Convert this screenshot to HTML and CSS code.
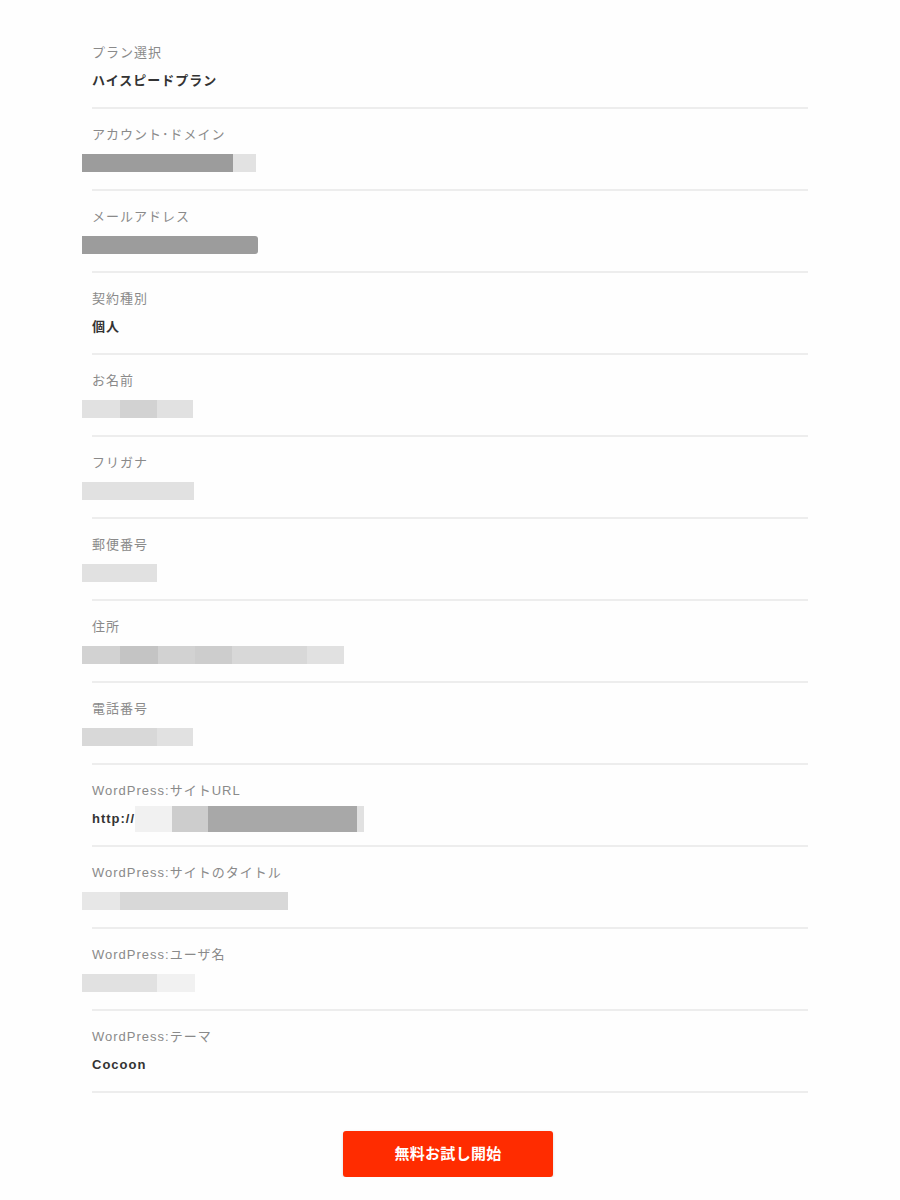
FILE: index.html
```html
<!DOCTYPE html>
<html lang="ja">
<head>
<meta charset="utf-8">
<title>確認</title>
<link rel="stylesheet" href="styles.css">
</head>
<body>
<main class="page">
  <dl class="list">
    <div class="row">
      <dt class="label">プラン選択</dt>
      <dd class="value">ハイスピードプラン</dd>
    </div>
    <div class="row">
      <dt class="label">アカウント･ドメイン</dt>
      <dd class="value"><span class="redact"><i class="seg dark" style="width:151px"></i><i class="seg pale" style="width:23px"></i></span></dd>
    </div>
    <div class="row">
      <dt class="label">メールアドレス</dt>
      <dd class="value"><span class="redact round"><i class="seg dark" style="width:176px"></i></span></dd>
    </div>
    <div class="row">
      <dt class="label">契約種別</dt>
      <dd class="value">個人</dd>
    </div>
    <div class="row">
      <dt class="label">お名前</dt>
      <dd class="value"><span class="redact"><i class="seg l3" style="width:38px"></i><i class="seg l2" style="width:37px"></i><i class="seg l3" style="width:36px"></i></span></dd>
    </div>
    <div class="row">
      <dt class="label">フリガナ</dt>
      <dd class="value"><span class="redact"><i class="seg l3" style="width:112px"></i></span></dd>
    </div>
    <div class="row">
      <dt class="label">郵便番号</dt>
      <dd class="value"><span class="redact"><i class="seg l3" style="width:75px"></i></span></dd>
    </div>
    <div class="row">
      <dt class="label">住所</dt>
      <dd class="value"><span class="redact"><i class="seg l2" style="width:38px"></i><i class="seg l1" style="width:38px"></i><i class="seg l2" style="width:37px"></i><i class="seg l1b" style="width:37px"></i><i class="seg l2b" style="width:75px"></i><i class="seg l3" style="width:37px"></i></span></dd>
    </div>
    <div class="row">
      <dt class="label">電話番号</dt>
      <dd class="value"><span class="redact"><i class="seg l2b" style="width:75px"></i><i class="seg l3" style="width:36px"></i></span></dd>
    </div>
    <div class="row">
      <dt class="label">WordPress:サイトURL</dt>
      <dd class="value url">http://<span class="redact tall"><i class="seg l4" style="width:37px"></i><i class="seg l1b" style="width:36px"></i><i class="seg mid" style="width:149px"></i><i class="seg l3" style="width:7px"></i></span></dd>
    </div>
    <div class="row">
      <dt class="label">WordPress:サイトのタイトル</dt>
      <dd class="value"><span class="redact"><i class="seg l3b" style="width:38px"></i><i class="seg l2b" style="width:168px"></i></span></dd>
    </div>
    <div class="row">
      <dt class="label">WordPress:ユーザ名</dt>
      <dd class="value"><span class="redact"><i class="seg l3" style="width:75px"></i><i class="seg l4" style="width:38px"></i></span></dd>
    </div>
    <div class="row">
      <dt class="label">WordPress:テーマ</dt>
      <dd class="value">Cocoon</dd>
    </div>
  </dl>
  <div class="actions">
    <button class="submit" type="button">無料お試し開始</button>
  </div>
</main>
</body>
</html>
```

FILE: styles.css
```css
* { box-sizing: border-box; }
html, body {
  margin: 0;
  padding: 0;
  background: #fefefe;
}
body {
  font-family: "Liberation Sans", "Noto Sans CJK JP", sans-serif;
  color: #333;
}
.page {
  padding: 27px 92px 0 92px;
}
.list {
  margin: 0;
  padding: 0;
}
.row {
  padding: 16px 0 16px;
  border-bottom: 2px solid #ededed;
}
.label {
  margin: 0;
  font-size: 13px;
  line-height: 20px;
  letter-spacing: 1px;
  color: #8a8a8a;
}
.value {
  margin: 8px 0 0 0;
  height: 20px;
  font-size: 13px;
  line-height: 20px;
  letter-spacing: 1px;
  font-weight: bold;
  color: #333;
  display: flex;
  align-items: center;
}
.value .redact {
  margin-left: -10px;
}
.value.url .redact {
  margin-left: 0;
}
.redact {
  display: flex;
  height: 18px;
  filter: blur(0.6px);
}
.redact.tall {
  height: 26px;
}
.redact.round .seg:last-child {
  border-radius: 0 3px 3px 0;
}
.seg {
  display: block;
  height: 100%;
}
.dark { background: #9c9c9c; }
.mid { background: #a8a8a8; }
.pale { background: #e2e2e2; }
.l1 { background: #c4c4c4; }
.l1b { background: #cdcdcd; }
.l2 { background: #d2d2d2; }
.l2b { background: #d8d8d8; }
.l3 { background: #e1e1e1; }
.l3b { background: #e7e7e7; }
.l4 { background: #f1f1f1; }
.actions {
  display: flex;
  justify-content: center;
  padding: 38px 4px 0 0;
}
.submit {
  width: 210px;
  height: 46px;
  padding: 0 0 3px 0;
  border: none;
  border-radius: 3px;
  background: #ff2c00;
  color: #fff;
  font-family: "Noto Sans CJK JP", sans-serif;
  font-size: 15px;
  font-weight: bold;
  letter-spacing: 0.3px;
  box-shadow: 0 1px 3px rgba(0,0,0,0.15);
}
```
